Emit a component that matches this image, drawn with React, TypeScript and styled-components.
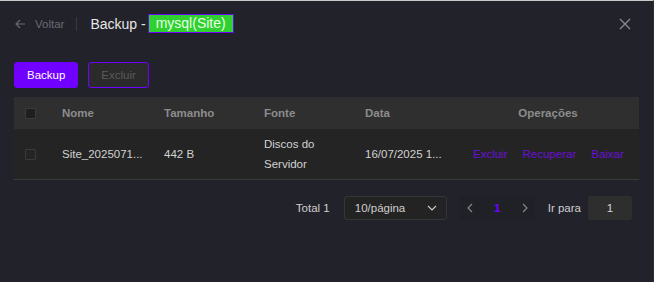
import styled, { createGlobalStyle } from 'styled-components'

const GlobalStyle = createGlobalStyle`
  html, body {
    margin: 0;
    padding: 0;
    background: #22222b;
  }
  body {
    font-family: "Liberation Sans", Arial, sans-serif;
  }
`

const PURPLE = '#7000ff'

const Drawer = styled.div`
  width: 654px;
  height: 282px;
  box-sizing: border-box;
  background: #22222b;
  border-top: 1px solid #c8c8c8;
  border-right: 1px solid #2c2c36;
  display: flex;
  flex-direction: column;
`

const Header = styled.div`
  display: flex;
  align-items: center;
  height: 45px;
  padding: 0 14px 0 15px;
  box-sizing: border-box;
`

const BackLink = styled.div`
  display: flex;
  align-items: center;
  gap: 9px;
  color: #6b6b72;
  font-size: 11.5px;
  padding-right: 12px;
  border-right: 1px solid #3a3a42;
  height: 14px;
`

const Title = styled.div`
  display: flex;
  align-items: center;
  margin-left: 13px;
  color: #e6e6e6;
  font-size: 14px;
  gap: 2px;
`

const Tag = styled.span`
  background: #2ed12e;
  border: 1px solid ${PURPLE};
  color: #e8ffe8;
  font-size: 14px;
  padding: 0 7px;
  height: 17px;
  line-height: 17px;
  border-radius: 1px;
`

const CloseButton = styled.div`
  margin-left: auto;
  margin-right: 8px;
  display: flex;
  color: #8a8a92;
`

const Body = styled.div`
  padding: 16px 14px 0 14px;
  display: flex;
  flex-direction: column;
`

const Actions = styled.div`
  display: flex;
  gap: 10px;
  margin-bottom: 9px;
`

const Button = styled.button<{ $primary?: boolean }>`
  height: 26px;
  padding: 0 12px;
  border-radius: 3px;
  font-family: inherit;
  font-size: 11.5px;
  border: 1px solid ${PURPLE};
  background: ${(p) => (p.$primary ? PURPLE : '#2b2b2b')};
  color: ${(p) => (p.$primary ? '#ffffff' : '#5a5a5a')};
`

const Table = styled.div`
  width: 625px;
  display: grid;
  grid-template-columns: 48px 102px 100px 101px 96px 178px;
  font-size: 11.5px;
`

const HeadCell = styled.div<{ $center?: boolean }>`
  background: #2f2f2f;
  height: 32px;
  display: flex;
  align-items: center;
  justify-content: ${(p) => (p.$center ? 'center' : 'flex-start')};
  padding-right: ${(p) => (p.$center ? '4px' : '0')};
  color: #8c8c8c;
  font-weight: bold;
`

const Cell = styled.div<{ $wrap?: boolean }>`
  background: #242424;
  height: 51px;
  box-sizing: border-box;
  border-bottom: 1px solid #3a3a3a;
  display: flex;
  align-items: center;
  color: #d2d2d2;
  line-height: 20px;
  white-space: ${(p) => (p.$wrap ? 'normal' : 'nowrap')};
`

const CheckBox = styled.span<{ $head?: boolean }>`
  width: 9px;
  height: 9px;
  margin-left: 11px;
  border: 1px solid ${(p) => (p.$head ? '#3c3c3c' : '#3a3a3a')};
  background: ${(p) => (p.$head ? '#1f1f1f' : 'transparent')};
  border-radius: 1px;
`

const Ops = styled.div`
  display: flex;
  gap: 15px;
  margin-left: 12px;
`

const OpLink = styled.span`
  color: #6a0fd9;
`

const Pagination = styled.div`
  display: flex;
  align-items: center;
  justify-content: flex-end;
  width: 618px;
  margin-top: 16px;
  font-size: 11.5px;
  color: #cfcfcf;
`

const Total = styled.span`
  margin-right: 14px;
`

const Select = styled.div`
  width: 103px;
  height: 24px;
  box-sizing: border-box;
  border: 1px solid #35353c;
  border-radius: 3px;
  background: #232323;
  display: flex;
  align-items: center;
  justify-content: space-between;
  padding: 0 9px 0 10px;
  margin-right: 13px;
`

const Pager = styled.div`
  display: flex;
  align-items: center;
  background: #202027;
  height: 24px;
  width: 75px;
  justify-content: space-between;
  padding: 0 6px;
  box-sizing: border-box;
  margin-right: 13px;
  color: #8a8a8a;
`

const PageNumber = styled.span`
  color: ${PURPLE};
  font-weight: bold;
`

const JumpInput = styled.div`
  margin-left: 7px;
  width: 44px;
  height: 24px;
  background: #2e2e2e;
  border-radius: 3px;
  display: flex;
  align-items: center;
  justify-content: center;
  color: #d6d6d6;
`

const Chevron = ({ dir }: { dir: 'left' | 'right' | 'down' }) => {
  const d = dir === 'left' ? 'M6 1 L2 5 L6 9' : dir === 'right' ? 'M2 1 L6 5 L2 9' : 'M1 3 L5 7 L9 3'
  const w = dir === 'down' ? 10 : 8
  return (
    <svg width={w} height={10} viewBox={`0 0 ${w} 10`} fill="none" stroke="currentColor" strokeWidth="1.1">
      <path d={d} />
    </svg>
  )
}

export default function App() {
  return (
    <>
      <GlobalStyle />
      <Drawer>
        <Header>
          <BackLink>
            <svg width="11" height="10" viewBox="0 0 11 10" fill="none" stroke="currentColor" strokeWidth="1.1">
              <path d="M10 5 H1.5 M5 1 L1 5 L5 9" />
            </svg>
            Voltar
          </BackLink>
          <Title>
            Backup -<Tag>mysql(Site)</Tag>
          </Title>
          <CloseButton>
            <svg width="12" height="12" viewBox="0 0 12 12" fill="none" stroke="currentColor" strokeWidth="1.3">
              <path d="M1 1 L11 11 M11 1 L1 11" />
            </svg>
          </CloseButton>
        </Header>
        <Body>
          <Actions>
            <Button $primary>Backup</Button>
            <Button>Excluir</Button>
          </Actions>
          <Table>
            <HeadCell><CheckBox $head /></HeadCell>
            <HeadCell>Nome</HeadCell>
            <HeadCell>Tamanho</HeadCell>
            <HeadCell>Fonte</HeadCell>
            <HeadCell>Data</HeadCell>
            <HeadCell $center>Operações</HeadCell>

            <Cell><CheckBox /></Cell>
            <Cell>Site_2025071...</Cell>
            <Cell>442 B</Cell>
            <Cell $wrap>Discos do<br />Servidor</Cell>
            <Cell>16/07/2025 1...</Cell>
            <Cell>
              <Ops>
                <OpLink>Excluir</OpLink>
                <OpLink>Recuperar</OpLink>
                <OpLink>Baixar</OpLink>
              </Ops>
            </Cell>
          </Table>
          <Pagination>
            <Total>Total 1</Total>
            <Select>
              10/página
              <Chevron dir="down" />
            </Select>
            <Pager>
              <Chevron dir="left" />
              <PageNumber>1</PageNumber>
              <Chevron dir="right" />
            </Pager>
            Ir para
            <JumpInput>1</JumpInput>
          </Pagination>
        </Body>
      </Drawer>
    </>
  )
}
